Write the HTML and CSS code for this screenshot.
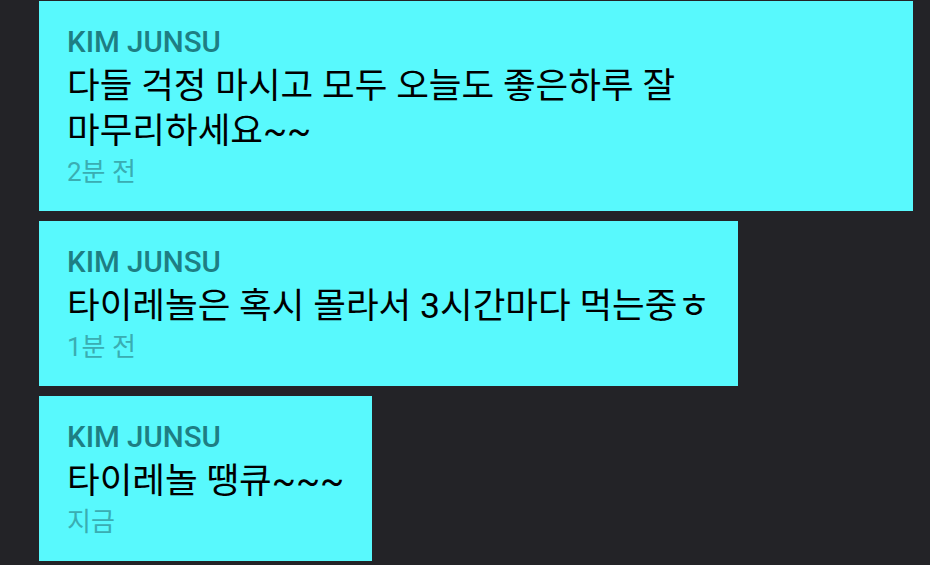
FILE: index.html
```html
<!DOCTYPE html>
<html lang="ko">
<head>
<meta charset="UTF-8">
<meta name="viewport" content="width=device-width, initial-scale=1.0">
<title>Messages</title>
<link rel="stylesheet" href="styles.css">
</head>
<body>

<div class="feed">
  <div class="bubble">
    <div class="name">KIM JUNSU</div>
    <div class="text">다들 걱정 마시고 모두 오늘도 좋은하루 잘 <span class="word">마무리하세요~~</span></div>
    <div class="time">2분 전</div>
  </div>

  <div class="bubble">
    <div class="name">KIM JUNSU</div>
    <div class="text">타이레놀은 혹시 몰라서 3시간마다 먹는중ㅎ</div>
    <div class="time">1분 전</div>
  </div>

  <div class="bubble">
    <div class="name">KIM JUNSU</div>
    <div class="text">타이레놀 땡큐~~~</div>
    <div class="time">지금</div>
  </div>
</div>

</body>
</html>
```

FILE: styles.css
```css
body {
  margin: 0;
  background-color: #232327;
  font-family: Roboto, "Noto Sans CJK KR", sans-serif;
}
.feed {
  display: flex;
  flex-direction: column;
  align-items: flex-start;
  gap: 10px;
  padding: 1px 0 0 39px;
}
.bubble {
  max-width: 818px;
  padding: 22px 28px 22px;
  background-color: #58f9fd;
}
.name {
  font-size: 29.5px;
  font-weight: 500;
  line-height: 38px;
  color: #1e7e83;
}
.text {
  font-size: 35.5px;
  line-height: 45px;
  color: #000;
  margin-top: 3px;
  word-break: keep-all;
}
.text .word {
  white-space: nowrap;
}
.time {
  font-size: 26px;
  line-height: 34px;
  color: #3aadb2;
  margin-top: 1px;
}
```
